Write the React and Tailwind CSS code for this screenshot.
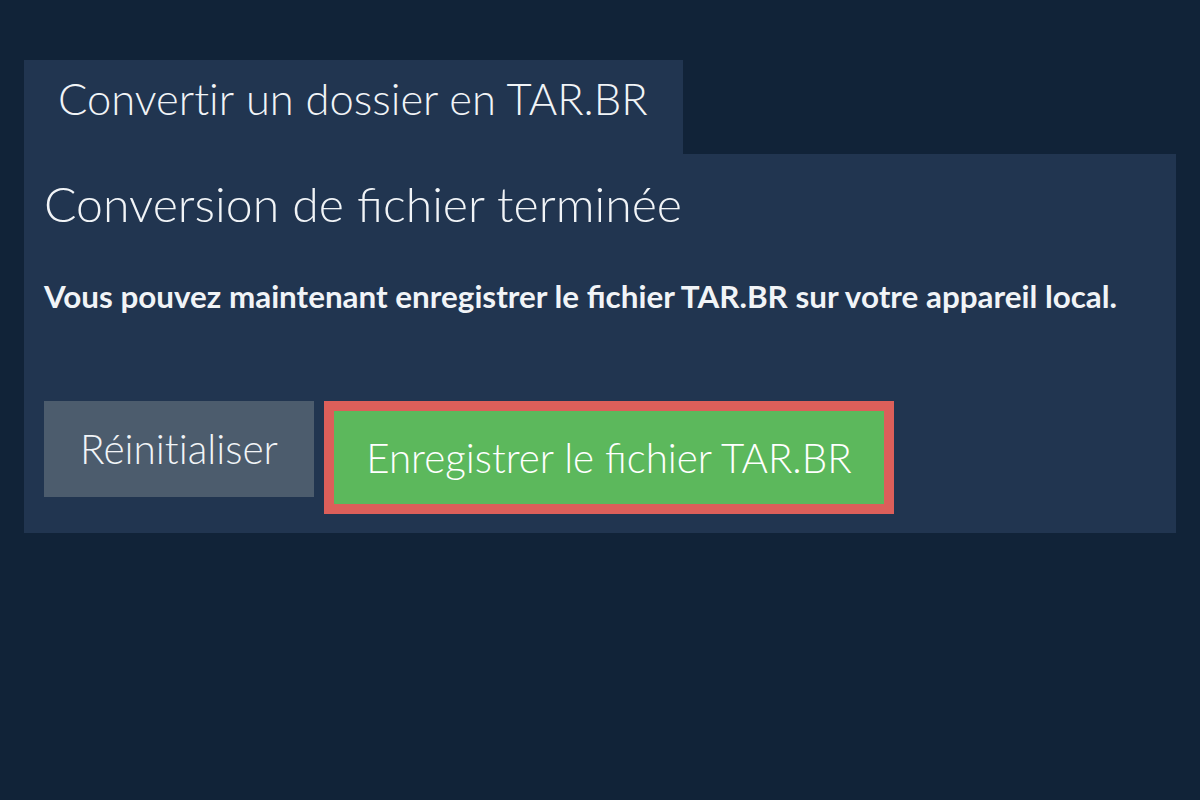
export default function App() {
  return (
    <div className="w-[1200px] h-[800px] bg-[#112338] pt-[60px] px-[24px]" style={{ fontFamily: "Lato, 'Open Sans', sans-serif" }}>
      <div className="flex">
        <div className="w-[659px] h-[94px] bg-[#213550] text-[#f1f4f7] text-[43.5px] font-light leading-none pl-[34px] pt-[17px] whitespace-nowrap">
          <span className="[font-variant-ligatures:no-common-ligatures]">Convertir</span> un dossier en TAR.BR
        </div>
      </div>
      <div className="bg-[#213550] h-[379px] px-[20px] pt-[25px] text-[#f1f4f7]">
        <h1 className="text-[48.2px] font-light leading-none whitespace-nowrap">Conversion de fichier terminée</h1>
        <p className="mt-[54px] h-[31px] text-[31.4px] font-bold leading-none whitespace-nowrap">
          Vous pouvez maintenant enregistrer le fichier TAR.BR sur votre appareil local.
        </p>
        <div className="mt-[89px] flex items-start gap-[10px]">
          <button className="w-[270px] h-[96px] flex items-center justify-center bg-[#4c5c6d] text-[40.5px] font-light leading-none text-[#f1f4f7]">
            <span className="[font-variant-ligatures:no-common-ligatures]">Réinitialiser</span>
          </button>
          <div className="border-[10px] border-[#dc5f5a]">
            <button className="w-[550px] h-[93px] flex items-center justify-center bg-[#5cb85c] text-[40.3px] font-light leading-none text-white">
              Enregistrer le fichier TAR.BR
            </button>
          </div>
        </div>
      </div>
    </div>
  );
}
